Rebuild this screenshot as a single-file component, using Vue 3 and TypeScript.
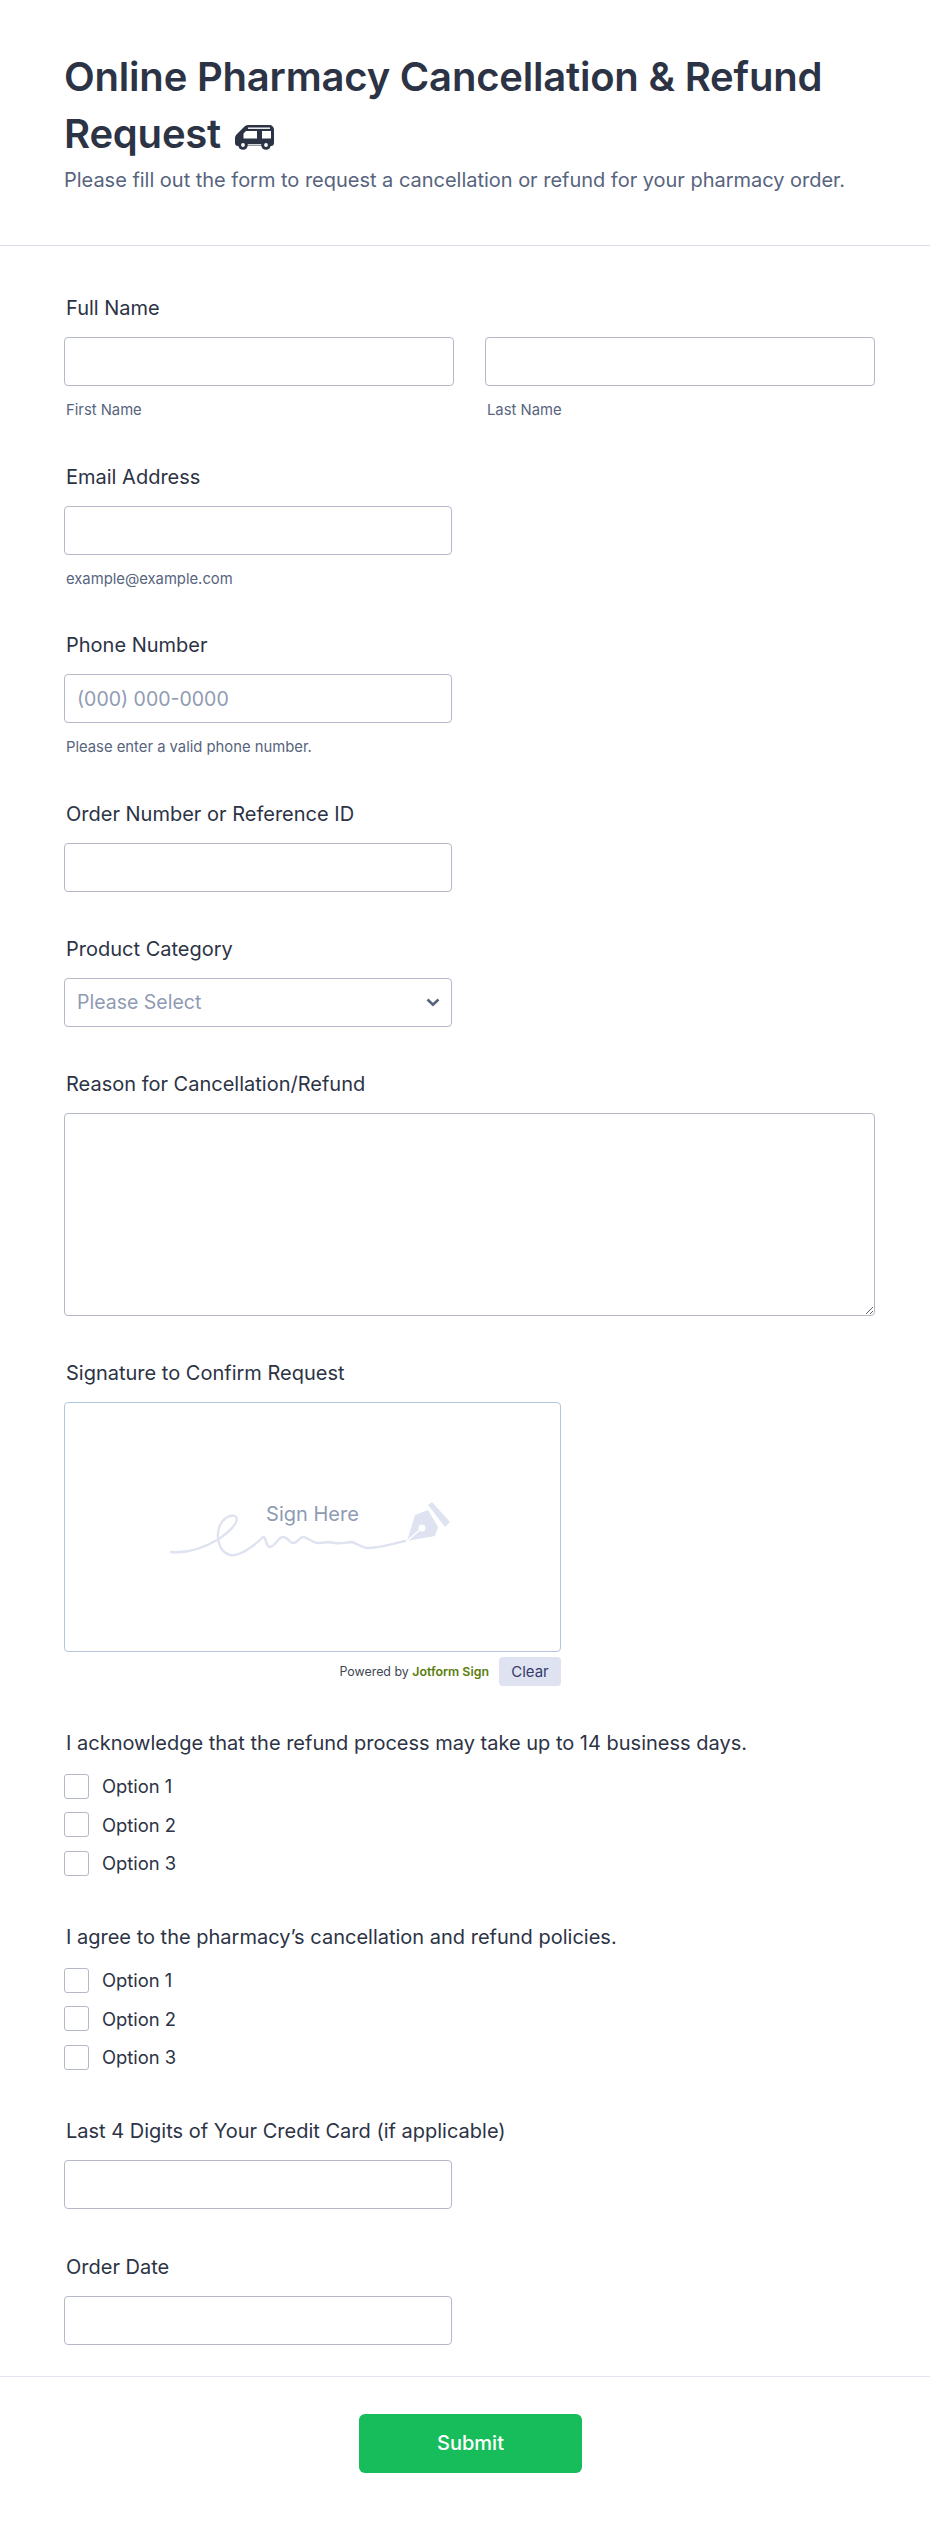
<template>
  <main class="form">
    <header class="form-header">
      <h1>
        Online Pharmacy Cancellation &amp; Refund Request
        <svg class="van" width="39" height="25" viewBox="0 0 39 25">
          <path d="M13 0h21c3 0 5 2 5 5v12c0 3-1 4-3 4H3c-2 0-3-1-3-3v-5c0-2 1-3 2-4l7-7c1-1 2-2 4-2z" fill="#2c3345" />
          <path d="M13 2.500h22v1.400H13z" fill="#fff" />
          <path d="M11 6h11v7.500H8.500V8.500zM27 6h9v7.500h-9z" fill="#fff" />
          <path d="M22 6h5v7.500h-5z" fill="#2c3345" />
          <circle cx="24.500" cy="7.500" r="2" fill="#2c3345" />
          <path d="M12 19.200h15v1.300H12z" fill="#fff" />
          <circle cx="8" cy="20" r="4.800" fill="#2c3345" />
          <circle cx="8" cy="20" r="1.900" fill="#fff" />
          <circle cx="31" cy="20" r="4.800" fill="#2c3345" />
          <circle cx="31" cy="20" r="1.900" fill="#fff" />
        </svg>
      </h1>
      <p>Please fill out the form to request a cancellation or refund for your pharmacy order.</p>
    </header>

    <form class="form-body" @submit.prevent>
      <div class="field">
        <label class="label">Full Name</label>
        <div class="name-row">
          <div class="name-col">
            <input class="input input-full" type="text" />
            <span class="sublabel">First Name</span>
          </div>
          <div class="name-col">
            <input class="input input-full" type="text" />
            <span class="sublabel">Last Name</span>
          </div>
        </div>
      </div>

      <div class="field">
        <label class="label">Email Address</label>
        <input class="input" type="text" />
        <span class="sublabel">example@example.com</span>
      </div>

      <div class="field">
        <label class="label">Phone Number</label>
        <input class="input" type="text" placeholder="(000) 000-0000" />
        <span class="sublabel">Please enter a valid phone number.</span>
      </div>

      <div class="field">
        <label class="label">Order Number or Reference ID</label>
        <input class="input" type="text" />
      </div>

      <div class="field">
        <label class="label">Product Category</label>
        <div class="select-wrap">
          <select class="input select">
            <option>Please Select</option>
          </select>
          <svg class="chevron" width="14" height="9" viewBox="0 0 14 9" fill="none">
            <path d="M1.5 1.500 7 6.800l5.500-5.300" stroke="#57647e" stroke-width="2.600" />
          </svg>
        </div>
      </div>

      <div class="field">
        <label class="label">Reason for Cancellation/Refund</label>
        <textarea class="input textarea"></textarea>
      </div>

      <div class="field">
        <label class="label">Signature to Confirm Request</label>
        <div class="signature">
          <svg class="signature-art" width="282" height="60" viewBox="0 0 282 60" fill="none">
            <path
              d="M1 52C20 54 37 46 49 39C58 33 70 22 66 17C62 13 52 18 49 28C46 38 49 52 60 55C70 57 85 45 93 37C97 37 95 47 100 47C105 47 108 37 113 37C118 37 120 44 124 43C128 42 130 37 133 37C138 37 142 44 150 43C155 42 160 42 165 43C172 44 177 42 182 42C188 44 192 48 198 48C210 48 225 43 235 41"
              stroke="#dfe3f1"
              stroke-width="2.400"
              stroke-linecap="round"
            />
            <path d="M237 41 245 15 258 10 268 27 265 36Z" fill="#dfe3f1" />
            <path d="M237 41 252 28" stroke="#fff" stroke-width="1.500" />
            <circle cx="252" cy="28" r="3.500" fill="#fff" />
            <path d="M258 5 262 2 280 22 275 27Z" fill="#dfe3f1" />
          </svg>
          <span class="sign-here">Sign Here</span>
        </div>
        <div class="signature-foot">
          <span class="powered">Powered by <b>Jotform Sign</b></span>
          <button class="clear" type="button">Clear</button>
        </div>
      </div>

      <div class="field field-check" v-for="group in checkGroups" :key="group">
        <label class="label label-check">{{ group }}</label>
        <div class="options">
          <label class="option" v-for="opt in options" :key="opt">
            <span class="box"></span>
            {{ opt }}
          </label>
        </div>
      </div>

      <div class="field field-card">
        <label class="label">Last 4 Digits of Your Credit Card (if applicable)</label>
        <input class="input" type="text" />
      </div>

      <div class="field field-last">
        <label class="label">Order Date</label>
        <input class="input" type="text" />
      </div>

      <div class="form-footer">
        <button class="submit" type="submit">Submit</button>
      </div>
    </form>
  </main>
</template>

<script setup lang="ts">
const checkGroups: string[] = [
  'I acknowledge that the refund process may take up to 14 business days.',
  'I agree to the pharmacy’s cancellation and refund policies.'
]
const options: string[] = ['Option 1', 'Option 2', 'Option 3']
</script>

<style>
body {
  background: #fff;
}
</style>

<style scoped>
.form {
  width: 930px;
  min-height: 2523px;
  background: #fff;
  font-family: Inter, "Noto Sans", sans-serif;
  color: #2c3345;
}

.form-header {
  box-sizing: content-box;
  height: 197px;
  padding: 48px 64px 0;
  border-bottom: 1px solid #dadee8;
}

.form-header h1 {
  margin: 0;
  font-size: 40px;
  line-height: 57px;
  font-weight: 600;
  letter-spacing: -0.2px;
}

.van {
  margin-left: 4px;
  vertical-align: -2px;
}

.form-header p {
  margin: 6px 0 0;
  font-size: 20px;
  line-height: 24px;
  letter-spacing: -0.02px;
  color: #57647e;
}

.form-body {
  padding: 50px 0 0;
}

.field {
  padding: 0 55px 0 64px;
  margin-bottom: 45px;
}

.label {
  display: block;
  padding-left: 2px;
  margin-bottom: 17px;
  font-size: 20px;
  line-height: 24px;
  font-weight: 430;
}

.label-check {
  margin-bottom: 19px;
}

.name-row {
  display: flex;
  gap: 31px;
}

.name-col {
  flex: 1;
}

.input {
  display: block;
  box-sizing: border-box;
  width: 388px;
  height: 49px;
  padding: 0 12px;
  border: 1px solid #b4b8c8;
  border-radius: 4px;
  background: #fff;
  font-family: inherit;
  font-size: 19.500px;
  color: #2c3345;
  outline: none;
}

.input-full {
  width: 100%;
}

.input::placeholder {
  color: #8f9bb3;
  opacity: 1;
}

.sublabel {
  display: block;
  padding-left: 2px;
  margin-top: 15px;
  font-size: 14.800px;
  line-height: 18.500px;
  color: #57647e;
}

.select-wrap {
  position: relative;
  width: 388px;
}

.select {
  appearance: none;
  color: #8f9bb3;
}

.chevron {
  position: absolute;
  right: 12px;
  top: 20px;
}

.textarea {
  width: 100%;
  height: 203px;
  padding: 10px 12px;
}

.signature {
  position: relative;
  box-sizing: border-box;
  width: 497px;
  height: 250px;
  border: 1px solid #b3c6de;
  border-radius: 4px;
}

.signature-art {
  position: absolute;
  left: 105px;
  top: 97px;
}

.sign-here {
  position: absolute;
  left: 0;
  right: 0;
  top: 99px;
  text-align: center;
  font-size: 20px;
  line-height: 24px;
  color: #8f9bb3;
}

.signature-foot {
  display: flex;
  justify-content: flex-end;
  align-items: center;
  gap: 10px;
  width: 497px;
  margin-top: 5px;
}

.powered {
  font-size: 12.400px;
  color: #3e4652;
}

.powered b {
  font-weight: 600;
  color: #5c7d0e;
}

.clear {
  width: 62px;
  height: 29px;
  padding: 0;
  border: 0;
  border-radius: 4px;
  background: #dfe3f1;
  font-family: inherit;
  font-size: 15px;
  color: #343c6a;
}

.field-check {
  margin-bottom: 49px;
}

.options {
  display: flex;
  flex-direction: column;
  gap: 13.500px;
}

.option {
  display: flex;
  align-items: center;
  gap: 13px;
  height: 25px;
  font-size: 18.400px;
  line-height: 24px;
  color: #2c3345;
}

.box {
  box-sizing: border-box;
  width: 25px;
  height: 25px;
  border: 1px solid #b4b8c8;
  border-radius: 3px;
  background: #fff;
}

.field-card {
  margin-bottom: 46px;
}

.field-last {
  margin-bottom: 31px;
}

.form-footer {
  display: flex;
  justify-content: center;
  padding: 37px 0 0 11px;
  border-top: 1px solid #e3e5f5;
}

.submit {
  width: 223px;
  height: 59px;
  border: 0;
  border-radius: 6px;
  background: #18bd5b;
  font-family: inherit;
  font-size: 20px;
  font-weight: 500;
  color: #fff;
}
</style>
